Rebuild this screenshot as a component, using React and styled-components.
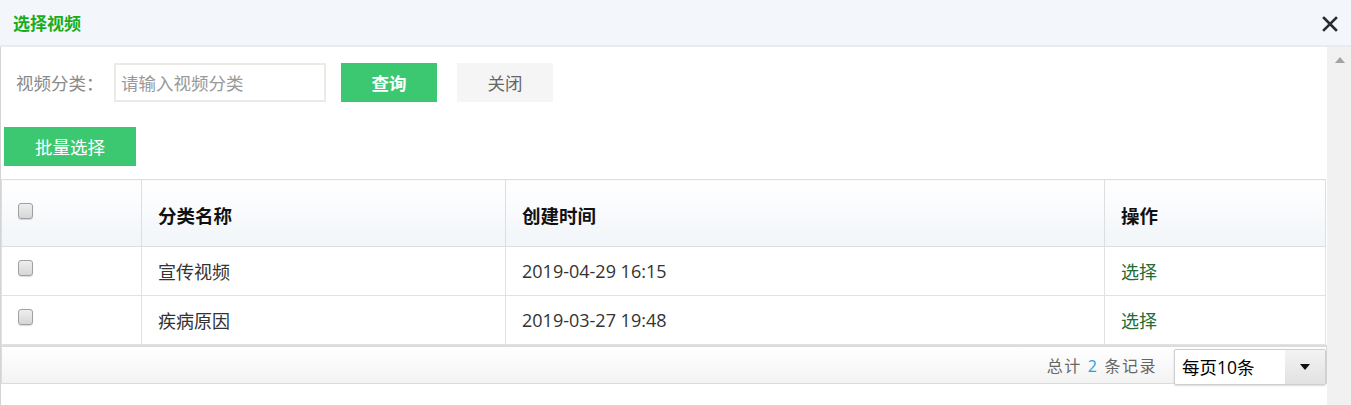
import React from "react";
import styled, { createGlobalStyle } from "styled-components";

const GlobalStyle = createGlobalStyle`
  html, body {
    margin: 0;
    padding: 0;
    background: #fff;
    font-family: "Open Sans", "Noto Sans CJK SC", sans-serif;
  }
`;

const Dialog = styled.div`
  width: 1351px;
  height: 405px;
  display: flex;
  flex-direction: column;
  overflow: hidden;
`;

const TitleBar = styled.div`
  height: 45px;
  flex: none;
  display: flex;
  align-items: center;
  justify-content: space-between;
  padding: 0 13px 0 13px;
  background: #f3f6fb;
  border-bottom: 2px solid #e9ebee;
`;

const Title = styled.h1`
  margin: 0;
  font-size: 17px;
  font-weight: 700;
  color: #19ad19;
`;

const CloseButton = styled.button`
  border: none;
  background: none;
  padding: 0;
  margin-top: 2px;
  display: flex;
  cursor: pointer;
`;

const Body = styled.div`
  flex: 1;
  display: flex;
  min-height: 0;
`;

const Content = styled.div`
  flex: 1;
  border-left: 1px solid #d4d4d4;
  padding-top: 16px;
`;

const ScrollTrack = styled.div`
  width: 25px;
  flex: none;
  background: #f1f1f1;
  display: flex;
  justify-content: center;
  padding-top: 10px;
  box-sizing: border-box;
`;

const ArrowUp = styled.div`
  width: 0;
  height: 0;
  border-left: 5px solid transparent;
  border-right: 5px solid transparent;
  border-bottom: 6px solid #a3a3a3;
`;

const SearchRow = styled.div`
  display: flex;
  align-items: center;
  padding-left: 15px;
  height: 39px;
`;

const Label = styled.label`
  font-size: 17.5px;
  color: #8a8a8a;
  width: 98px;
`;

const Input = styled.input`
  width: 212px;
  height: 39px;
  box-sizing: border-box;
  border: 2px solid #ebebe6;
  padding: 0 5px;
  font-size: 17.5px;
  font-family: inherit;
  outline: none;
  &::placeholder {
    color: #999;
  }
`;

const Button = styled.button`
  height: 39px;
  width: ${(p) => p.$width || 96}px;
  margin-left: ${(p) => p.$gap || 0}px;
  border: none;
  font-family: inherit;
  font-size: 17.5px;
  font-weight: ${(p) => (p.$bold ? 700 : 400)};
  color: ${(p) => (p.$plain ? "#666" : "#fff")};
  background: ${(p) => (p.$plain ? "#f5f5f5" : "#3cc870")};
  cursor: pointer;
  padding: 0;
`;

const Toolbar = styled.div`
  padding: 25px 0 0 3px;
  height: 39px;
  margin-bottom: 13px;
`;

const Table = styled.table`
  width: 1324px;
  border-collapse: collapse;
  table-layout: fixed;
  font-size: 18px;
  color: #333;
`;

const HeadCell = styled.th`
  height: 62px;
  padding: 4px 16px 0;
  text-align: left;
  font-weight: 700;
  font-size: 18.5px;
  color: #111;
  border: 1px solid #dedede;
  background: linear-gradient(#ffffff, #f1f5f9);
`;

const Cell = styled.td`
  height: 48px;
  padding: 0 16px;
  border: 1px solid #e2e2e2;
  color: ${(p) => (p.$link ? "#226c37" : "#333")};
`;

const CheckCell = styled.div`
  display: flex;
  padding-bottom: ${(p) => (p.$head ? 8 : 7)}px;
`;

const Check = styled.input.attrs({ type: "checkbox" })`
  appearance: none;
  margin: 0;
  width: 15px;
  height: 16px;
  border: 1px solid #a0a0a0;
  border-radius: 3px;
  background: linear-gradient(#eeeeee, #d6d6d6);
  box-shadow: 0 1px 1px rgba(0, 0, 0, 0.15);
`;

const Footer = styled.div`
  width: 1324px;
  height: 36px;
  box-sizing: content-box;
  border: 1px solid #dcdcdc;
  border-top: 2px solid #dcdcdc;
  background: linear-gradient(#ffffff, #f3f3f3);
  display: flex;
  align-items: center;
  justify-content: flex-end;
  gap: 17px;
  font-size: 16px;
  color: #666;
`;

const Total = styled.span`
  letter-spacing: 1.5px;
`;

const Count = styled.span`
  color: #2a9fd6;
  margin: 0 6px;
`;

const Select = styled.div`
  display: flex;
  width: 152px;
  height: 36px;
  box-sizing: border-box;
  margin-top: 3px;
  border: 1px solid #cfcfcf;
  border-radius: 2px;
  box-shadow: 0 1px 2px rgba(0, 0, 0, 0.15);
  background: #fff;
`;

const SelectValue = styled.span`
  flex: 1;
  padding-left: 7px;
  font-size: 17.5px;
  color: #000;
  display: flex;
  align-items: center;
`;

const SelectArrow = styled.span`
  width: 40px;
  display: flex;
  align-items: center;
  justify-content: center;
  background: linear-gradient(#f3f3f3, #e2e2e2);
  &::after {
    content: "";
    border-left: 5px solid transparent;
    border-right: 5px solid transparent;
    border-top: 6px solid #111;
  }
`;

const rows = [
  { name: "宣传视频", time: "2019-04-29 16:15" },
  { name: "疾病原因", time: "2019-03-27 19:48" },
];

export default function App() {
  return (
    <Dialog>
      <GlobalStyle />
      <TitleBar>
        <Title>选择视频</Title>
        <CloseButton aria-label="关闭">
          <svg width="16" height="16" viewBox="0 0 16 16">
            <path d="M2 2 L14 14 M14 2 L2 14" stroke="#2b2b2b" strokeWidth="2.6" strokeLinecap="square" />
          </svg>
        </CloseButton>
      </TitleBar>
      <Body>
        <Content>
          <SearchRow>
            <Label>视频分类：</Label>
            <Input placeholder="请输入视频分类" />
            <Button $bold $gap={15}>查询</Button>
            <Button $plain $gap={20}>关闭</Button>
          </SearchRow>
          <Toolbar>
            <Button $width={132}>批量选择</Button>
          </Toolbar>
          <Table>
            <colgroup>
              <col style={{ width: 140 }} />
              <col style={{ width: 364 }} />
              <col style={{ width: 599 }} />
              <col style={{ width: 221 }} />
            </colgroup>
            <thead>
              <tr>
                <HeadCell>
                  <CheckCell $head><Check /></CheckCell>
                </HeadCell>
                <HeadCell>分类名称</HeadCell>
                <HeadCell>创建时间</HeadCell>
                <HeadCell>操作</HeadCell>
              </tr>
            </thead>
            <tbody>
              {rows.map((r) => (
                <tr key={r.name}>
                  <Cell>
                    <CheckCell><Check /></CheckCell>
                  </Cell>
                  <Cell>{r.name}</Cell>
                  <Cell>{r.time}</Cell>
                  <Cell $link>选择</Cell>
                </tr>
              ))}
            </tbody>
          </Table>
          <Footer>
            <Total>
              总计<Count>2</Count>条记录
            </Total>
            <Select>
              <SelectValue>每页10条</SelectValue>
              <SelectArrow />
            </Select>
          </Footer>
        </Content>
        <ScrollTrack>
          <ArrowUp />
        </ScrollTrack>
      </Body>
    </Dialog>
  );
}
